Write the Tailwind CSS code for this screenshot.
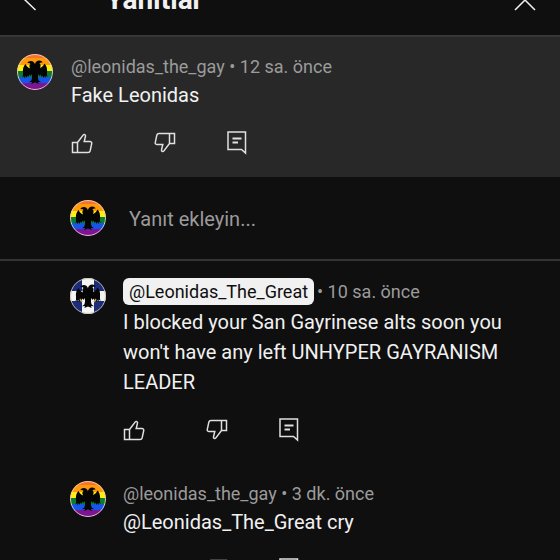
<!DOCTYPE html>
<html lang="tr">

<head>
  <meta charset="UTF-8">
  <meta content="width=device-width, initial-scale=1" name="viewport">
  <title>Yanıtlar</title>
  <script src="https://cdn.jsdelivr.net/npm/@tailwindcss/browser@4"></script>
</head>

<body class="h-screen overflow-hidden bg-[#0f0f0f] font-['Roboto',sans-serif] text-xl leading-[30px] text-[#f1f1f1]">

  <!-- shared drawings -->
  <svg class="hidden">
    <symbol id="icon-like" viewBox="0 0 24 24">
      <path d="M1.500 11.500h5v10h-5zM6.500 11.500l5.800-7.600c.8-1 2.500-.2 2.200 1.200L13.200 10.500h5.600c1.500 0 2.200.9 1.900 2.200l-1.500 7c-.3 1.200-1 1.800-2.200 1.800H6.500" />
    </symbol>
    <symbol id="icon-reply" viewBox="0 0 24 24">
      <path d="M4 1h17.500v21l-4-3.500H4z" />
      <path d="M8.500 7.500h9M8.500 11.500h5.500" stroke-width="2" />
    </symbol>
    <symbol id="eagle" viewBox="0 0 36 36">
      <path d="M18 10.500c-.5-2-2-3.500-4.200-3.500-1.600 0-2.800.8-3.500 2 1.500-.3 2.600 0 3.300 1-1 .5-1.300 1.500-1.200 2.500l.6 2c-2-.8-3.500-2.500-4.500-4.500C6.500 12 5.500 15 6 19c.2 1.500 0 3-.5 4.500l1.700-1.500.2 2.500L8.800 22l.7 2 1-2.500 1 1.500.7-2.500 1.300 1.500 1-2c.8 2 .7 4.500-.2 6.500l-2.300 1.800 3-.3-.7 2L18 28.500l3.700 1.500-.7-2 3 .3-2.300-1.800c-.9-2-1-4.500-.2-6.500l1 2 1.300-1.500.7 2.500 1-1.500 1 2.500.7-2 1.400 2 .2-2.500 1.700 1.500c-.5-1.500-.7-3-.5-4.500.5-4-.5-7-2.500-9-1 2-2.500 3.700-4.500 4.500l.6-2c.1-1-.2-2-1.200-2.500.7-1 1.800-1.300 3.300-1-.7-1.200-1.900-2-3.500-2-2.200 0-3.700 1.500-4.200 3.500z" />
    </symbol>
    <symbol id="avatar-rainbow" viewBox="0 0 36 36">
      <path d="M0 0h36v5H0z" fill="#f4742b" />
      <path d="M0 4h36v8H0z" fill="#ff9a0c" />
      <path d="M0 11h36v6H0z" fill="#ffee12" />
      <path d="M0 17h36v7H0z" fill="#0b7b2c" />
      <path d="M0 23h36v6H0z" fill="#1457e8" />
      <path d="M0 29h36v7H0z" fill="#7b1594" />
      <use fill="#050505" href="#eagle" />
      <circle cx="18" cy="18" fill="none" r="17.500" stroke="#e9c6c0" stroke-width="1" />
    </symbol>
    <symbol id="avatar-cross" viewBox="0 0 36 36">
      <path d="M0 0h36v36H0z" fill="#1c2c78" />
      <path d="M12 0h12v36H12zM0 13h36v10H0z" fill="#f4f4f4" />
      <use fill="#050505" href="#eagle" />
      <path d="M10 21l2 3M26 21l-2 3" stroke="#b99b52" stroke-width="1.500" />
      <circle cx="18" cy="18" fill="none" r="17.500" stroke="#c9c6a4" stroke-width="1" />
    </symbol>
  </svg>

  <!-- header, scrolled halfway out of the window -->
  <header class="-mt-9 flex h-18 items-center border-b border-[#3a3a3a] px-[22px]">
    <button aria-label="Geri" class="mr-[58px]" type="button">
      <svg class="size-[26px] fill-none stroke-[#f1f1f1] stroke-[1.5]" viewBox="0 0 26 26">
        <path d="M13.500 23L2 12 13.500 1M2 12h22" />
      </svg>
    </button>
    <h1 class="grow text-[28px] leading-8 font-bold">Yanıtlar</h1>
    <button aria-label="Kapat" type="button">
      <svg class="size-[26px] fill-none stroke-[#f1f1f1] stroke-[1.5]" viewBox="0 0 26 26">
        <path d="M3 3l20 20M23 3L3 23" />
      </svg>
    </button>
  </header>

  <main>
    <article class="flex gap-[18px] border-t border-[#343434] bg-[#282828] px-[17px] pt-[17px] pb-[22px]">
      <svg class="size-9 shrink-0 rounded-full"><use href="#avatar-rainbow" /></svg>
      <div class="grow">
        <p class="text-lg leading-[26px] text-[#9b9b9b]">@leonidas_the_gay • 12 sa. önce</p>
        <p>Fake Leonidas</p>
        <div class="mt-[21px] flex fill-none stroke-[#e0e0e0] stroke-[1.5]">
          <button aria-label="Beğen" class="mr-[57px]" type="button"><svg class="size-6"><use href="#icon-like" /></svg></button>
          <button aria-label="Beğenme" class="mr-12" type="button"><svg class="size-6 rotate-180"><use href="#icon-like" /></svg></button>
          <button aria-label="Yanıtla" type="button"><svg class="size-6"><use href="#icon-reply" /></svg></button>
        </div>
      </div>
    </article>

    <form class="flex items-center gap-[23px] border-b-2 border-[#333333] py-[23px] pr-[18px] pl-[70px]">
      <svg class="size-9 shrink-0 rounded-full"><use href="#avatar-rainbow" /></svg>
      <input aria-label="Yanıt ekleyin" class="h-9 min-w-0 grow bg-transparent pt-0.5 outline-none placeholder:text-[#9b9b9b]" placeholder="Yanıt ekleyin..." type="text">
    </form>

    <article class="flex gap-[17px] pt-[17px] pr-[18px] pb-[22px] pl-[70px]">
      <svg class="size-9 shrink-0 rounded-full"><use href="#avatar-cross" /></svg>
      <div class="grow">
        <p class="flex items-center text-lg leading-[27px] text-[#9b9b9b]">
          <a class="mr-[3px] rounded-md bg-[#f1f1f1] px-1.5 text-[#0f0f0f]" href="#">@Leonidas_The_Great</a>
          <span>• 10 sa. önce</span>
        </p>
        <p class="mt-0.5">I blocked your San Gayrinese alts soon you won't have any left UNHYPER GAYRANISM LEADER</p>
        <div class="mt-[21px] flex fill-none stroke-[#e0e0e0] stroke-[1.5]">
          <button aria-label="Beğen" class="mr-[57px]" type="button"><svg class="size-6"><use href="#icon-like" /></svg></button>
          <button aria-label="Beğenme" class="mr-12" type="button"><svg class="size-6 rotate-180"><use href="#icon-like" /></svg></button>
          <button aria-label="Yanıtla" type="button"><svg class="size-6"><use href="#icon-reply" /></svg></button>
        </div>
      </div>
    </article>

    <article class="flex gap-[17px] pt-[17px] pr-[18px] pb-[22px] pl-[70px]">
      <svg class="size-9 shrink-0 rounded-full"><use href="#avatar-rainbow" /></svg>
      <div class="grow">
        <p class="text-lg leading-[26px] text-[#9b9b9b]">@leonidas_the_gay • 3 dk. önce</p>
        <p>@Leonidas_The_Great cry</p>
        <div class="mt-[21px] flex fill-none stroke-[#e0e0e0] stroke-[1.5]">
          <button aria-label="Beğen" class="mr-[57px]" type="button"><svg class="size-6"><use href="#icon-like" /></svg></button>
          <button aria-label="Beğenme" class="mr-12" type="button"><svg class="size-6 rotate-180"><use href="#icon-like" /></svg></button>
          <button aria-label="Yanıtla" type="button"><svg class="size-6"><use href="#icon-reply" /></svg></button>
        </div>
      </div>
    </article>
  </main>
</body>

</html>
